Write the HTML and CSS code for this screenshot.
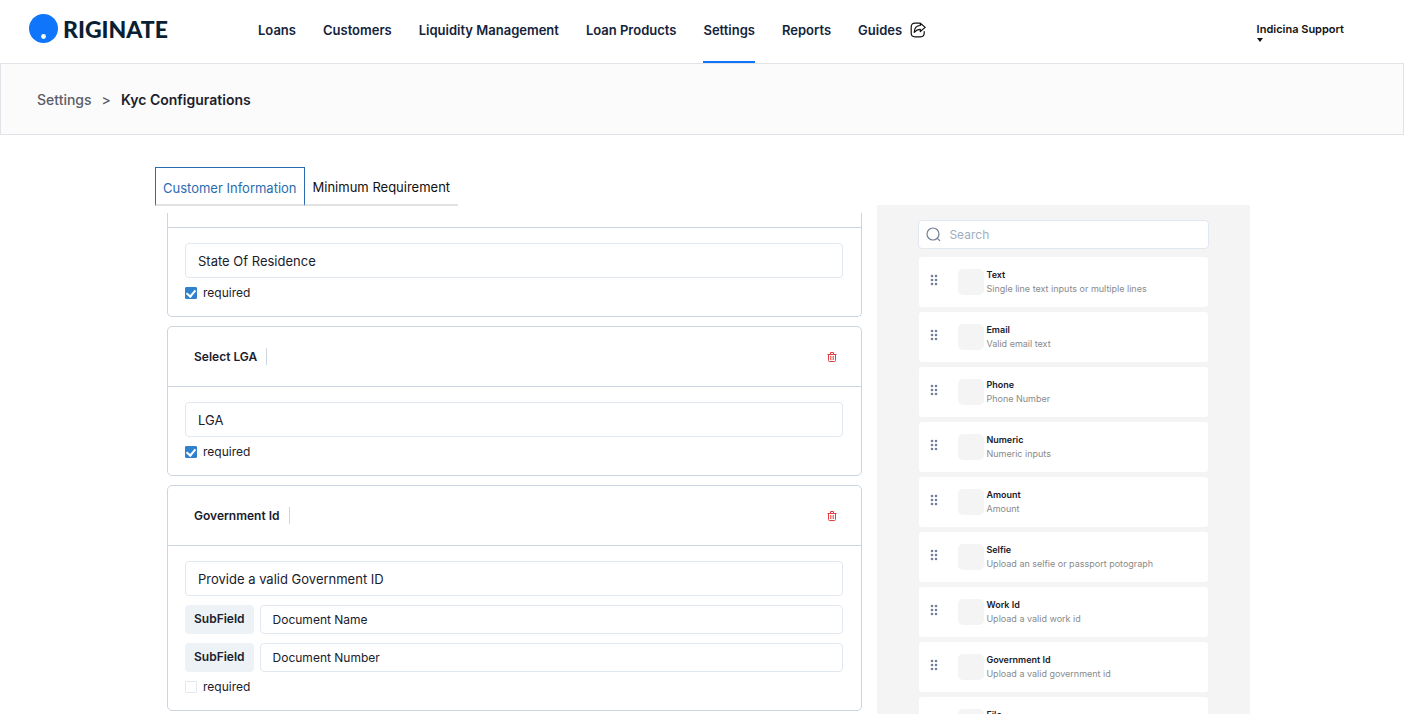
FILE: index.html
```html
<!DOCTYPE html>
<html lang="en">
<head>
    <meta charset="UTF-8">
    <meta name="viewport" content="width=device-width, initial-scale=1.0">
    <title>Kyc Configurations</title>
    <link rel="stylesheet" href="styles.css">
</head>
<body>
    <header class="header">
        <a href="#" class="logo">
            <svg width="29" height="29" viewBox="0 0 29 29" aria-hidden="true">
                <circle cx="14.5" cy="14.5" r="14.5" fill="#0f75fa"/>
                <circle cx="14.5" cy="22.5" r="2.4" fill="#fff"/>
            </svg>
            <span>RIGINATE</span>
        </a>
        <nav class="nav">
            <a href="#">Loans</a>
            <a href="#">Customers</a>
            <a href="#">Liquidity Management</a>
            <a href="#">Loan Products</a>
            <a href="#" class="active">Settings</a>
            <a href="#">Reports</a>
            <a href="#">Guides
                <svg width="16" height="16" viewBox="0 0 16 16" fill="none" stroke="#111" stroke-width="1.2" stroke-linejoin="round" stroke-linecap="round" aria-hidden="true">
                    <path d="M9.5 1.2H5Q1.2 1.2 1.2 5v6Q1.2 14.8 5 14.8h5.5q3.7 0 3.7-3.8V9.5"/>
                    <path d="M10.3 1.2l4.9 4.2-4.9 4.1V7.3C7.6 7.2 6 8.3 4.2 10.4 4.3 6.3 6.5 3.7 10.3 3.5z"/>
                </svg>
            </a>
        </nav>
        <button class="user">
            <span>Indicina Support</span>
            <span class="caret"></span>
        </button>
    </header>

    <div class="breadcrumb">
        <a href="#">Settings</a>
        <span>&gt;</span>
        <strong>Kyc Configurations</strong>
    </div>

    <main class="main">
        <section class="builder">
            <div class="tabs">
                <button class="tab selected">Customer Information</button>
                <button class="tab">Minimum Requirement</button>
            </div>

            <div class="cards">
                <div class="card card-scrolled">
                    <div class="card-header"></div>
                    <div class="card-body">
                        <input type="text" class="field" value="State Of Residence" aria-label="State field">
                        <label class="required"><input type="checkbox" checked> required</label>
                    </div>
                </div>

                <div class="card">
                    <div class="card-header">
                        <h3>Select LGA</h3>
                        <button class="delete" aria-label="Delete">
                            <svg width="10" height="10" viewBox="0 0 10 10" fill="none" stroke="#e53e3e" aria-hidden="true">
                                <path d="M3.5 2V.5h3V2M.5 2.5h9M1.5 2.5v6q0 1 1 1h5q1 0 1-1v-6"/>
                                <path d="M3.5 4v4M5 4v4M6.5 4v4" stroke-width=".7"/>
                            </svg>
                        </button>
                    </div>
                    <div class="card-body">
                        <input type="text" class="field" value="LGA" aria-label="LGA field">
                        <label class="required"><input type="checkbox" checked> required</label>
                    </div>
                </div>

                <div class="card">
                    <div class="card-header">
                        <h3>Government Id</h3>
                        <button class="delete" aria-label="Delete">
                            <svg width="10" height="10" viewBox="0 0 10 10" fill="none" stroke="#e53e3e" aria-hidden="true">
                                <path d="M3.5 2V.5h3V2M.5 2.5h9M1.5 2.5v6q0 1 1 1h5q1 0 1-1v-6"/>
                                <path d="M3.5 4v4M5 4v4M6.5 4v4" stroke-width=".7"/>
                            </svg>
                        </button>
                    </div>
                    <div class="card-body">
                        <input type="text" class="field" value="Provide a valid Government ID" aria-label="Government ID field">
                        <div class="subfield">
                            <label for="sub1">SubField</label>
                            <input type="text" id="sub1" value="Document Name">
                        </div>
                        <div class="subfield">
                            <label for="sub2">SubField</label>
                            <input type="text" id="sub2" value="Document Number">
                        </div>
                        <label class="required"><input type="checkbox"> required</label>
                    </div>
                </div>
            </div>
        </section>

        <aside class="panel">
            <label class="search">
                <svg width="15" height="15" viewBox="0 0 15 15" fill="none" stroke="#718096" stroke-width="1.2" stroke-linecap="round" aria-hidden="true">
                    <circle cx="7" cy="7" r="6"/>
                    <path d="M11.3 11.3l2.4 2.4"/>
                </svg>
                <input type="text" placeholder="Search" aria-label="Search">
            </label>
            <ul class="types" id="types"></ul>
        </aside>
    </main>

    <script>
        const types = [
            ['Text', 'Single line text inputs or multiple lines'],
            ['Email', 'Valid email text'],
            ['Phone', 'Phone Number'],
            ['Numeric', 'Numeric inputs'],
            ['Amount', 'Amount'],
            ['Selfie', 'Upload an selfie or passport potograph'],
            ['Work Id', 'Upload a valid work id'],
            ['Government Id', 'Upload a valid government id'],
            ['File', 'Upload a file']
        ];

        const list = document.getElementById('types');
        types.forEach(function ([name, text]) {
            const item = document.createElement('li');
            item.className = 'type';
            item.innerHTML = `
                <svg class="grip" width="8" height="12" viewBox="0 0 8 12" fill="#718096" aria-hidden="true">
                    <circle cx="2" cy="2" r="1.3"/><circle cx="6" cy="2" r="1.3"/>
                    <circle cx="2" cy="6" r="1.3"/><circle cx="6" cy="6" r="1.3"/>
                    <circle cx="2" cy="10" r="1.3"/><circle cx="6" cy="10" r="1.3"/>
                </svg>
                <span class="thumb"></span>
                <div><h4>${name}</h4><p>${text}</p></div>`;
            list.appendChild(item);
        });
    </script>
</body>
</html>
```
FILE: styles.css
```css
* {
    box-sizing: border-box;
}
body {
    margin: 0;
    height: 100vh;
    overflow: hidden;
    display: flex;
    flex-direction: column;
    background-color: white;
    color: #1a202c;
    font-family: Inter, "Liberation Sans", sans-serif;
    font-size: 13px;
}
a {
    color: inherit;
    text-decoration: none;
}
button, input {
    font: inherit;
    color: inherit;
}
button {
    border: none;
    background: none;
    padding: 0;
    cursor: pointer;
}
h3, h4, p, ul {
    margin: 0;
    padding: 0;
}

/* top bar */
.header {
    display: flex;
    flex: none;
    height: 63px;
    padding: 0 60px 0 29px;
}
.logo {
    display: flex;
    align-items: center;
    gap: 5px;
    width: 229px;
    padding-bottom: 6px;
    color: #0a1f33;
    font-family: Lato, sans-serif;
    font-size: 23px;
    font-weight: 900;
}
.nav {
    display: flex;
    gap: 27px;
    color: #14233b;
    font-weight: 600;
}
.nav a {
    display: flex;
    align-items: center;
    gap: 8px;
    padding-bottom: 2px;
    border-bottom: 2px solid transparent;
}
.nav a.active {
    border-bottom-color: #0f75fa;
}
.user {
    display: flex;
    flex-direction: column;
    justify-content: center;
    gap: 2px;
    margin-left: auto;
    color: #111;
    font-size: 11px;
    font-weight: 600;
}
.caret {
    align-self: flex-start;
    border: 3px solid transparent;
    border-top: 4px solid #111;
    border-bottom: 0;
}

.breadcrumb {
    display: flex;
    flex: none;
    align-items: center;
    gap: 10px;
    height: 72px;
    padding: 0 36px;
    border: 1px solid #e2e2e8;
    background-color: #fbfbfb;
    color: #5b5d68;
    font-size: 14px;
    font-weight: 500;
}
.breadcrumb strong {
    color: #1c1e2c;
    font-weight: 600;
}

.main {
    display: grid;
    grid-template-columns: minmax(0, 1fr) 34%;
    flex: 1;
    min-height: 0;
    padding: 32px 11% 0 155px;
}
.builder {
    display: flex;
    flex-direction: column;
    padding-right: 15px;
}

/* tabs */
.tabs {
    display: flex;
    height: 39px;
}
.tab {
    padding: 2px 8px 0;
    border-bottom: 2px solid #e2e2e2;
    color: #111;
}
.tab.selected {
    padding: 4px 7px 0;
    border: 1px solid #2b6cb0;
    border-bottom: 2px solid #e2e2e2;
    color: #2b6cb0;
}

/* form cards */
.cards {
    display: flex;
    flex-direction: column;
    gap: 9px;
    padding: 7px 0 0 12px;
}
.card {
    border: 1px solid #cbd5e0;
    border-radius: 5px;
}
.card-header {
    display: flex;
    align-items: center;
    justify-content: space-between;
    height: 60px;
    padding: 0 24px 0 26px;
    border-bottom: 1px solid #cbd5e0;
}
.card-header h3 {
    padding-right: 9px;
    border-right: 1px solid #cbd5e0;
    font-size: 12px;
    font-weight: 600;
    line-height: 17px;
}
.card-scrolled {
    border-top: none;
    border-radius: 0 0 5px 5px;
}
.card-scrolled .card-header {
    height: 15px;
}
.delete {
    display: flex;
}
.card-body {
    display: flex;
    flex-direction: column;
    gap: 9px;
    padding: 15px 18px 17px 17px;
}
.field {
    width: 100%;
    height: 35px;
    padding: 0 12px;
    border: 1px solid #e2e8f0;
    border-radius: 4px;
}
.required {
    display: flex;
    align-items: center;
    gap: 6px;
    height: 12px;
    font-size: 12px;
    line-height: 12px;
}
.required input {
    display: grid;
    place-items: center;
    appearance: none;
    width: 12px;
    height: 12px;
    margin: 0;
    border: 1px solid #e2e8f0;
    border-radius: 1px;
}
.required input:checked {
    border-color: #3182ce;
    background-color: #3182ce;
}
.required input:checked::after {
    content: "";
    width: 4px;
    height: 7px;
    margin-bottom: 2px;
    border: solid white;
    border-width: 0 2px 2px 0;
    transform: rotate(40deg);
}
.subfield {
    display: flex;
    gap: 6px;
    height: 29px;
    font-size: 12px;
}
.subfield label {
    padding: 0 9px;
    border-radius: 4px;
    background-color: #edf2f7;
    font-weight: 600;
    line-height: 28px;
}
.subfield input {
    flex: 1;
    min-width: 0;
    padding: 0 12px;
    border: 1px solid #e2e8f0;
    border-radius: 4px;
}

/* side panel */
.panel {
    margin-top: 38px;
    padding: 15px 41px 0;
    background-color: #f4f4f4;
}
.search {
    display: flex;
    align-items: center;
    gap: 8px;
    height: 29px;
    padding: 0 7px;
    border: 1px solid #e2e8f0;
    border-radius: 4px;
    background-color: white;
}
.search input {
    flex: 1;
    min-width: 0;
    padding: 0;
    border: none;
    outline: none;
    background: none;
    font-size: 12px;
}
.search input::placeholder {
    color: #a0aec0;
}
.types {
    display: flex;
    flex-direction: column;
    gap: 5px;
    padding: 8px 1px 0;
    list-style: none;
}
.type {
    display: flex;
    flex: none;
    align-items: center;
    height: 50px;
    padding: 0 11px;
    border-radius: 3px;
    background-color: white;
}
.grip {
    margin: 0 20px 4px 0;
}
.thumb {
    width: 26px;
    height: 26px;
    margin-right: 2px;
    border-radius: 5px;
    background-color: #f4f4f4;
}
.type h4 {
    font-size: 9px;
    font-weight: 600;
    line-height: 14px;
}
.type p {
    color: #8a8a8a;
    font-size: 9px;
    line-height: 14px;
}
```
